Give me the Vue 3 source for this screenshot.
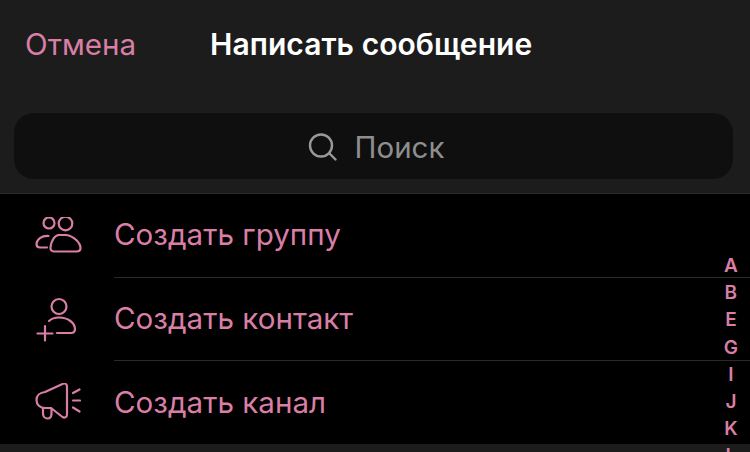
<script setup>
const rows = [
  { id: 'group', label: 'Создать группу' },
  { id: 'contact', label: 'Создать контакт' },
  { id: 'channel', label: 'Создать канал' },
]
const letters = ['A', 'B', 'E', 'G', 'I', 'J', 'K', 'L']
</script>

<template>
  <div class="screen">
    <header class="top">
      <div class="nav">
        <span class="cancel">Отмена</span>
        <span class="title">Написать сообщение</span>
      </div>
      <div class="search">
        <svg class="lens" width="32" height="32" viewBox="0 -2 32 32" fill="none" stroke="#999" stroke-width="2.400" stroke-linecap="round">
          <circle cx="14" cy="13.500" r="11" />
          <path d="M22.500 21.500 L28.500 27.500" />
        </svg>
        <span class="placeholder">Поиск</span>
      </div>
    </header>
    <main class="list">
      <div v-for="row in rows" :key="row.id" class="row">
        <div class="icon">
          <svg v-if="row.id === 'group'" width="48" height="38" viewBox="-1 1 48 38" fill="none" stroke="#d97fa6" stroke-width="2.200" stroke-linecap="round" stroke-linejoin="round">
            <circle cx="14" cy="7" r="5.500" />
            <circle cx="30.500" cy="7.500" r="6.800" />
            <path d="M13.500 20 C7 19.500 2 23 1.500 28 C1.500 30.500 3 31.500 5 31.500 L12 31.500" />
            <path d="M24 19 H31 C39 20 45.500 27 45.500 32 C45.500 34.500 44 35.500 41.500 35.500 H19 C16.500 35.500 15 33.500 15.500 31 C16.500 24 20 19 24 19 Z" />
          </svg>
          <svg v-else-if="row.id === 'contact'" width="46" height="46" viewBox="0 -2 46 46" fill="none" stroke="#d97fa6" stroke-width="2.200" stroke-linecap="round" stroke-linejoin="round">
            <circle cx="24" cy="8.500" r="7.500" />
            <path d="M14 23 C17 20 20 19.500 24 19.500 C33 19.500 40 25 40 31 C40 33.500 38.500 35 36 35 H22" />
            <path d="M10 28 V42.500 M2.500 35.500 H17.500" />
          </svg>
          <svg v-else width="46" height="40" viewBox="0 1 46 40" fill="none" stroke="#d97fa6" stroke-width="2.200" stroke-linecap="round" stroke-linejoin="round">
            <path d="M10 10 L28 1.800 C30 1 32 2 32 4.500 V32.500 C32 35.500 29.500 36.300 27.500 35 L16 26 H10 C5 26 1.500 22.500 1.500 18 C1.500 13.500 5 10.500 10 10 Z" />
            <path d="M8 26 V31.500 C8 34.500 10 36.500 12.500 36.500 C15 36.500 16.500 34.500 16.500 31.500 V26.500" />
            <path d="M38 11 L44.500 7.500 M38 18.500 H45 M38 25.500 L44.500 29.500" />
          </svg>
        </div>
        <div class="label">{{ row.label }}</div>
      </div>
    </main>
    <div class="bottom"></div>
    <nav class="index">
      <span v-for="l in letters" :key="l">{{ l }}</span>
    </nav>
  </div>
</template>

<style>
html, body { margin: 0; background: #000; }
</style>

<style scoped>
.screen {
  position: relative;
  width: 750px;
  height: 452px;
  overflow: hidden;
  background: #000;
  font-family: Inter, "Liberation Sans", Arial, sans-serif;
}
.top {
  height: 194px;
  box-sizing: border-box;
  background: #1c1c1c;
  border-bottom: 1px solid #2c2c2c;
  padding: 0 17px 0 14px;
}
.nav {
  display: flex;
  align-items: center;
  height: 88px;
  padding-left: 11px;
}
.cancel {
  width: 185px;
  font-size: 29.600px;
  color: #d97fa6;
}
.title {
  font-size: 30px;
  font-weight: 600;
  letter-spacing: 0.05px;
  color: #fff;
}
.search {
  display: flex;
  align-items: center;
  justify-content: center;
  gap: 16px;
  height: 66px;
  margin-top: 25px;
  padding-left: 4px;
  border-radius: 20px;
  background: #0f0f0f;
}
.placeholder {
  font-size: 29.500px;
  padding-top: 2px;
  color: #8e8e8e;
}
.list {
  height: 250px;
}
.row {
  display: flex;
  height: 83.500px;
  align-items: center;
}
.icon {
  display: flex;
  justify-content: center;
  width: 114px;
  padding-left: 1px;
  box-sizing: border-box;
}
.label {
  flex: 1;
  height: 100%;
  display: flex;
  align-items: center;
  padding-bottom: 2px;
  font-size: 29.600px;
  color: #d97fa6;
  border-bottom: 1px solid #2a2a2a;
  box-sizing: border-box;
}
.row:last-child .label {
  border-bottom: 0;
}
.bottom {
  height: 8px;
  background: #1c1c1c;
}
.index {
  position: absolute;
  top: 252px;
  right: 12px;
  display: flex;
  flex-direction: column;
  align-items: center;
  font-size: 19px;
  line-height: 27.200px;
  font-weight: 600;
  color: #d97fa6;
}
</style>
